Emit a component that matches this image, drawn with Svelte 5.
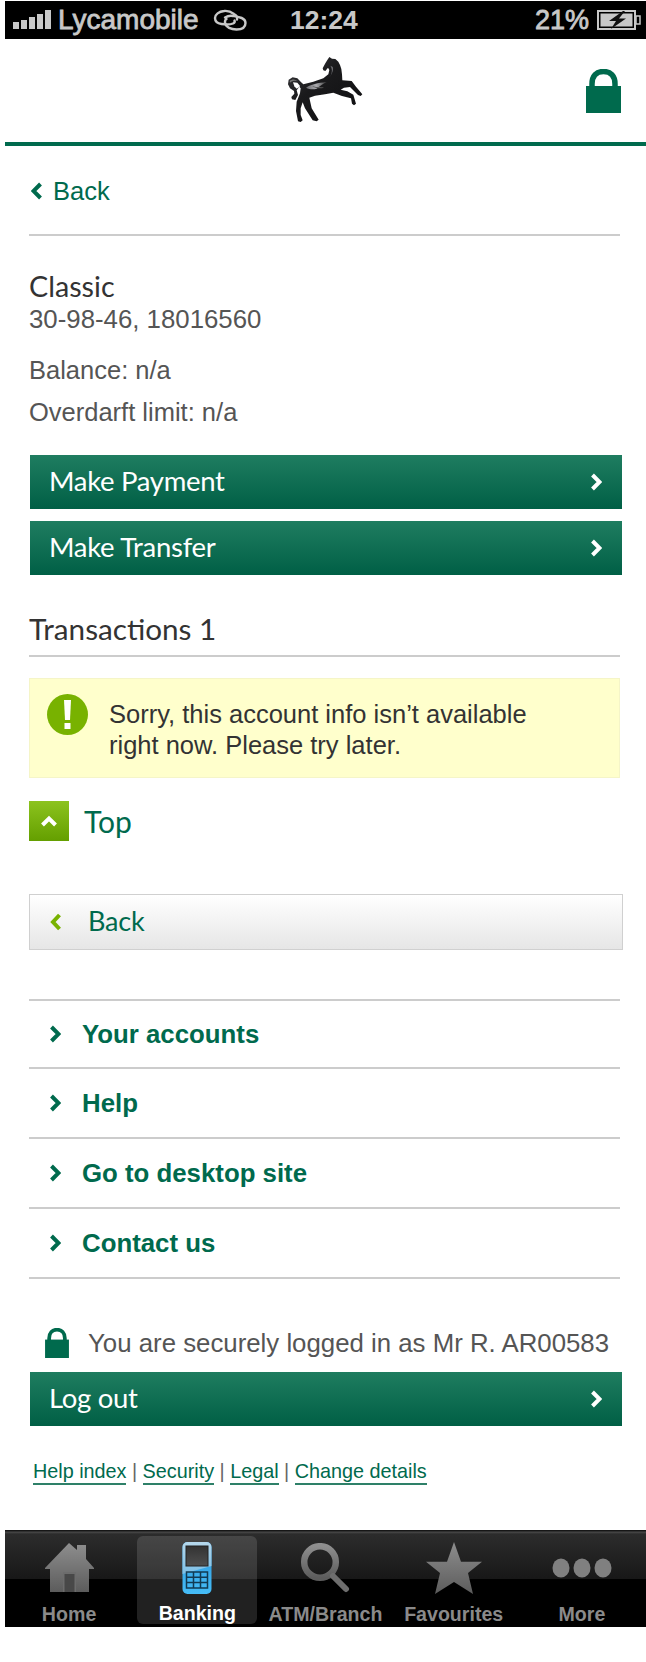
<script>
  const nav = ['Your accounts', 'Help', 'Go to desktop site', 'Contact us'];
  const links = ['Help index', 'Security', 'Legal', 'Change details'];
</script>

{#snippet chev()}
  <svg class="chev" viewBox="0 0 12 18"><path d="M2.500 2 9.500 9l-7 7" /></svg>
{/snippet}

{#snippet padlock(cls)}
  <svg class={cls} viewBox="0 0 35 44"><path d="M6 18V15C6 7 10.500 2.500 17.500 2.500S29 7 29 15v3" fill="none" stroke="#006a4d" stroke-width="5.500" /><rect y="17" width="35" height="27" fill="#006a4d" /></svg>
{/snippet}

<div class="page">
  <div class="status">
    <svg class="signal" viewBox="0 0 38 20"><g fill="#c8c8c8"><rect y="12" width="6" height="7" /><rect x="8" y="10" width="6" height="9" /><rect x="16" y="7" width="6" height="12" /><rect x="24" y="4" width="6" height="15" /><rect x="32" y="0" width="6" height="19" /></g></svg>
    <span class="carrier">Lycamobile</span>
    <svg class="link" viewBox="0 0 34 22"><g fill="none" stroke="#c8c8c8" stroke-width="2.400" stroke-linecap="round"><path d="M24 10.500c.5-2.500-.5-4.500-3-5.500-2-1.500-6-3.500-10-3-5 .5-9 3.500-9 7s3 5.500 6.500 6 8 1 11.500-.5c1.500-.8 2-2 1.500-3" /><path d="M12 8.500c2.500-1.500 5-2 8-1.500 5 .8 12.500 1.500 12.500 7s-5 6.500-9 6.500c-5 0-11-2-11.500-7-.1-1.500.5-3 1.500-3.500" /></g></svg>
    <span class="time">12:24</span>
    <span class="batt-text">21%</span>
    <svg class="battery" viewBox="0 0 44 20"><rect x="1" y="1" width="37" height="18" fill="none" stroke="#c8c8c8" stroke-width="2" /><rect x="3.500" y="3.500" width="32" height="13" fill="#c8c8c8" /><rect x="39" y="6" width="4" height="8" fill="none" stroke="#c8c8c8" stroke-width="1.500" /><path d="M26 1 12 11h7l-5 8 15-10.500h-7l6-7.500z" fill="#111" /></svg>
  </div>

  <header class="top">
    <svg class="horse" viewBox="0 0 330 255">
      <defs>
        <linearGradient id="hg" x1="0" y1="0" x2="1" y2="1"><stop offset="0" stop-color="#3a3a3d" /><stop offset=".4" stop-color="#1a1a1c" /><stop offset="1" stop-color="#0e0e10" /></linearGradient>
        <linearGradient id="hl" x1="0" y1="0" x2="1" y2="0"><stop offset="0" stop-color="#77777b" /><stop offset=".5" stop-color="#c4c4c8" /><stop offset="1" stop-color="#444" /></linearGradient>
      </defs>
      <path fill="url(#hg)" d="M178 36L186 41 196 42 205 50 210 60 214 72 216 88 217 106 245 108 258 125 277 148 272 153 264 150 240 126 222 128 212 134 232 139 250 149 258 176 252 181 246 176 243 160 216 153 190 143 165 148 135 152 118 158 125 190 146 224 140 229 128 226 105 190 98 172 92 190 92 210 98 226 92 231 84 229 78 198 80 170 90 145 92 130 88 125 80 136 84 150 76 165 66 163 64 156 73 146 72 138 60 130 54 118 56 104 68 97 82 100 92 110 100 118 130 110 160 100 175 88 178 75 174 68 166 78 160 76 158 70 166 55 172 45Z" />
      <path fill="#fff" d="M69 112l13 1 8 10-2 3-8 5-7-7z" />
      <path fill="url(#hl)" d="M108 128c14-10 36-14 62-17-12 6-22 13-30 20-11 3-22 2-32-3z" opacity=".85" />
      <path fill="#8b8b90" d="M181 62c6 8 6 18 2 28l-7 8c8-6 15-20 12-32z" opacity=".85" />
      <path fill="#777" d="M59 108c7-6 16-6 24 0-8-2-17-1-23 5z" />
      <path fill="#555" d="M126 122c10 6 26 2 36 6-10 3-26 4-36-6z" />
    </svg>
    <div class="headlock">{@render padlock('lock-big')}</div>
  </header>

  <main>
    <a class="backlink"><svg class="bk" viewBox="0 0 12 18"><path d="M9.500 2 2.500 9l7 7" /></svg>Back</a>
    <hr class="rule first" />

    <h2 class="classic">Classic</h2>
    <p class="acct">30-98-46, 18016560</p>
    <p class="info bal">Balance: n/a</p>
    <p class="info od">Overdarft limit: n/a</p>

    <button class="cta one">Make Payment {@render chev()}</button>
    <button class="cta two">Make Transfer {@render chev()}</button>

    <h2 class="tx">Transactions 1</h2>
    <hr class="rule" />

    <div class="warn">
      <svg class="warn-icon" viewBox="0 0 41 41"><circle cx="20.500" cy="20.500" r="20.500" fill="#78b200" /><path d="M17 6h7l-1 20h-5z" fill="#fff" /><rect x="17.500" y="29" width="6" height="6" fill="#fff" /></svg>
      <p>Sorry, this account info isn’t available<br />right now. Please try later.</p>
    </div>

    <a class="toplink"><span class="topbox"><svg viewBox="0 0 18 12"><path d="M2.500 10 9 3.500l6.500 6.500" /></svg></span>Top</a>

    <button class="back-btn"><svg viewBox="0 0 12 18"><path d="M9.500 2 3 9l6.500 7" /></svg>Back</button>

    <nav>
      {#each nav as item}
        <a class="nav-row"><svg viewBox="0 0 12 18"><path d="M2.500 2 9.500 9l-7 7" /></svg>{item}</a>
      {/each}
    </nav>

    <div class="secure">{@render padlock('lock-small')}<span>You are securely logged in as Mr R. AR00583</span></div>
    <button class="cta">Log out {@render chev()}</button>

    <div class="links">
      {#each links as l, i}
        {#if i > 0}<span class="sep">{' | '}</span>{/if}<a>{l}</a>
      {/each}
    </div>
  </main>

  <footer class="tabs">
    <div class="tab">
      <svg width="50" height="50" viewBox="0 0 50 50"><defs><linearGradient id="tg" x1="0" y1="0" x2="0" y2="1"><stop offset="0" stop-color="#8e8e8e" /><stop offset="1" stop-color="#5c5c5c" /></linearGradient></defs><path fill="url(#tg)" d="M25 0l8 7V2h9v14l8 9v1h-5v23H6V26H1v-1z" /><rect x="19" y="29" width="13" height="20" fill="#6c6c6c" /><rect x="20.500" y="31" width="10" height="18" fill="#484848" /></svg>
      <span>Home</span>
    </div>
    <div class="tab active">
      <svg width="30" height="52" viewBox="0 0 30 52"><defs><linearGradient id="pg" x1="0" y1="0" x2="0" y2="1"><stop offset="0" stop-color="#2b96dc" /><stop offset="1" stop-color="#45bcf6" /></linearGradient><linearGradient id="pt" x1="0" y1="0" x2="0" y2="1"><stop offset="0" stop-color="#b6d8ec" /><stop offset="1" stop-color="#7cbfe6" /></linearGradient><linearGradient id="ps" x1="0" y1="0" x2="0" y2="1"><stop offset="0" stop-color="#333" /><stop offset="1" stop-color="#4e4e4e" /></linearGradient></defs><rect x="0.500" y="0" width="29" height="52" rx="5" fill="url(#pg)" /><path d="M.5 32V5a5 5 0 0 1 5-5h19a5 5 0 0 1 5 5v19z" fill="url(#pt)" /><rect x="4" y="4" width="22" height="20" fill="url(#ps)" stroke="#222" stroke-width="1" /><g fill="none" stroke="#123a52" stroke-width="1.500"><rect x="4.500" y="30" width="21" height="16" /><path d="M11.500 30v16M18.500 30v16M4.500 35.300h21M4.500 40.600h21" /></g></svg>
      <span>Banking</span>
    </div>
    <div class="tab">
      <svg width="50" height="50" viewBox="0 0 50 50"><circle cx="20" cy="19" r="15.800" fill="none" stroke="url(#tg)" stroke-width="6.500" /><path d="M33 33l13 13" stroke="#6e6e6e" stroke-width="6" stroke-linecap="round" /></svg>
      <span>ATM/Branch</span>
    </div>
    <div class="tab">
      <svg class="star" width="56" height="52" viewBox="0 0 56 52"><path fill="url(#tg)" d="M28 0l7 19.700h21L42 31l5 21-19-12-19 12 5-21L0 19.700h21z" /></svg>
      <span>Favourites</span>
    </div>
    <div class="tab">
      <svg width="60" height="52" viewBox="0 0 60 52"><g fill="#808080"><ellipse cx="9" cy="25" rx="8.500" ry="9.500" /><ellipse cx="30" cy="25" rx="8.500" ry="9.500" /><ellipse cx="51" cy="25" rx="8.500" ry="9.500" /></g></svg>
      <span>More</span>
    </div>
  </footer>
</div>

<style>
  :global(body) { margin: 0; background: #fff; }
  .page { width: 646px; height: 1662px; padding: 1px 0 0 5px; box-sizing: border-box; font-family: "Liberation Sans", Arial, sans-serif; overflow: hidden; }
  .status { height: 38px; background: #000; display: flex; align-items: center; color: #c8c8c8; font-weight: 700; }
  .signal { width: 38px; height: 20px; margin-left: 8px; }
  .carrier { margin-left: 7px; width: 141px; white-space: nowrap; font-size: 28px; font-weight: 400; -webkit-text-stroke: .8px #c8c8c8; }
  .link { width: 34px; height: 22px; margin-left: 14px; }
  .time { margin-left: 43px; font-size: 26.500px; }
  .batt-text { margin-left: auto; font-size: 27px; font-weight: 400; -webkit-text-stroke: .8px #c8c8c8; }
  .battery { width: 44px; height: 20px; margin: 0 5px 0 8px; }

  .top { height: 103px; border-bottom: 4px solid #006a4d; display: flex; position: relative; justify-content: center; }
  .horse { position: absolute; left: 265px; top: 6px; width: 110px; height: 85px; }
  .headlock { position: absolute; right: 25px; top: 30px; }
  :global(.lock-big) { display: block; width: 35px; height: 44px; }

  main { padding: 0 0 0 24px; width: 593px; }
  .backlink { display: flex; align-items: center; box-sizing: border-box; height: 88px; padding-top: 2px; color: #006a4d; font-size: 25.500px; }
  .bk { width: 12px; height: 18px; margin: 0 10px 0 2px; fill: none; stroke: #006a4d; stroke-width: 4; }
  .rule { border: 0; height: 2px; background: #ccc; margin: 0; width: 591px; }
  .first { margin-top: 0; }
  .classic { font-family: Lato, sans-serif; font-weight: 400; font-size: 28.700px; color: #333; margin: 32px 0 0; line-height: 36px; }
  .acct { margin: -1px 0 0; font-size: 25.800px; line-height: 32px; color: #555; }
  .info { margin: 0; font-size: 25.500px; line-height: 32px; color: #555; }
  .bal { margin-top: 19px; }
  .od { margin-top: 10px; }
  .cta { display: flex; align-items: center; justify-content: space-between; box-sizing: border-box; width: 592px; height: 54px; margin: 0 0 0 1px; padding: 0 20px 3px 19px; border: 0; color: #fff; font-family: Lato, sans-serif; font-size: 27.500px; letter-spacing: -.3px; background: linear-gradient(#1f7d60, #005f45); }
  .one { margin-top: 27px; }
  .two { margin-top: 12px; }
  .chev { width: 12px; height: 18px; fill: none; stroke: #fff; stroke-width: 4; position: relative; top: 1.500px; }
  .tx { font-family: Lato, sans-serif; font-weight: 400; font-size: 29.700px; line-height: 40px; color: #333; margin: 34px 0 0; height: 46px; }
  .tx + .rule { margin-top: 0; }
  .warn { margin-top: 21px; box-sizing: border-box; height: 100px; width: 591px; background: #ffc; border: 1px solid #f5f5c8; display: flex; padding: 15px 0 0 17px; }
  .warn-icon { width: 41px; height: 41px; flex: none; }
  .warn p { margin: 5px 0 0 21px; font-size: 25.500px; line-height: 31px; color: #333; }
  .toplink { display: flex; align-items: center; margin-top: 23px; height: 40px; color: #006a4d; font-family: Lato, sans-serif; font-size: 30px; line-height: 36px; }
  .topbox { width: 40px; height: 40px; margin-right: 15px; background: linear-gradient(#8cc31e, #649f00); display: flex; align-items: center; justify-content: center; }
  .topbox svg { width: 18px; height: 12px; fill: none; stroke: #fff; stroke-width: 4; }
  .back-btn { display: flex; align-items: center; box-sizing: border-box; width: 594px; height: 56px; margin-top: 53px; padding: 0 0 3px 20px; border: 1px solid #d0d0d0; background: linear-gradient(#fff, #e6e6e6); color: #006a4d; font-family: Lato, sans-serif; font-size: 27px; letter-spacing: -.2px; }
  .back-btn svg { width: 12px; height: 18px; margin-right: 26px; fill: none; stroke: #78b200; stroke-width: 4; position: relative; top: 1.500px; }
  nav { margin-top: 49px; border-top: 2px solid #ccc; width: 591px; }
  .nav-row { display: flex; align-items: center; box-sizing: border-box; height: 70px; border-bottom: 2px solid #ccc; color: #006a4d; font-weight: 700; font-size: 25.800px; }
  .nav-row:first-child { height: 68px; }
  .nav-row svg { width: 12px; height: 18px; margin: 0 21px 0 20px; fill: none; stroke: #006a4d; stroke-width: 4; }
  .secure { display: flex; align-items: center; height: 50px; margin: 39px 0 4px; padding-left: 16px; color: #555; font-size: 25.800px; white-space: nowrap; }
  :global(.lock-small) { width: 24px; height: 30px; margin-right: 19px; flex: none; }
  .links { margin: 31px 0 1px 4px; font-size: 19.800px; line-height: 28px; color: #666; white-space: pre; }
  .links a { color: #006a4d; border-bottom: 2px solid #2e8068; padding-bottom: 1px; }
  .tabs { position: relative; margin-top: 45px; height: 97px; display: grid; grid-template-columns: repeat(5, 1fr); background: linear-gradient(#161616 0, #161616 1px, #4a4a4a 2px, #2c2c2c 4px, #181818 50%, #000 50%); box-sizing: border-box; }
  .tab { display: flex; flex-direction: column; align-items: center; justify-content: flex-start; padding-top: 13px; position: relative; }
  .tab svg { display: block; flex: none; }
  .tab .star { margin-top: -1px; }
  .tab span { position: absolute; bottom: 1px; font-weight: 700; font-size: 19.600px; line-height: 24px; color: #8a8a8a; white-space: nowrap; }
  .tab.active { background: rgba(255, 255, 255, .13); border-radius: 6px; margin: 6px 4px 3px 4px; padding-top: 6px; }
  .tab.active span { color: #fff; bottom: -1px; }
</style>
